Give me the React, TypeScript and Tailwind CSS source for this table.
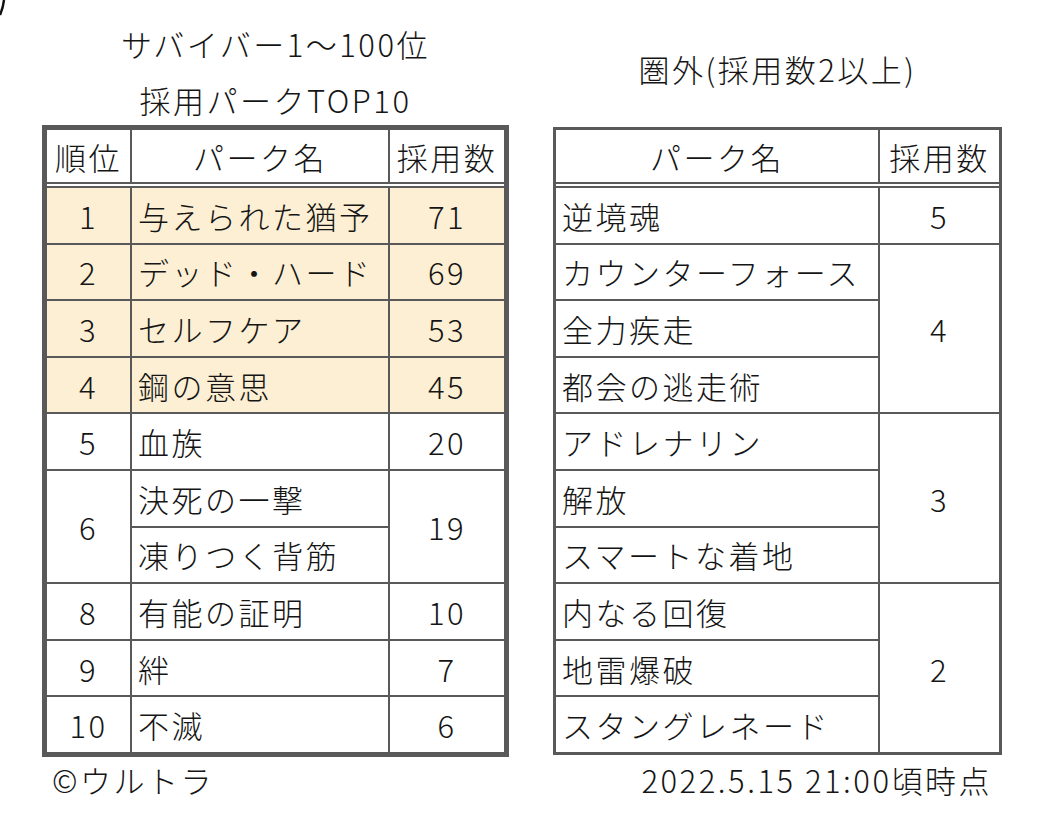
import React from "react";

type TopRow = { rank?: string; name: string; count?: string; span?: number; hot?: boolean };

const topRows: TopRow[] = [
  { rank: "1", name: "与えられた猶予", count: "71", hot: true },
  { rank: "2", name: "デッド・ハード", count: "69", hot: true },
  { rank: "3", name: "セルフケア", count: "53", hot: true },
  { rank: "4", name: "鋼の意思", count: "45", hot: true },
  { rank: "5", name: "血族", count: "20" },
  { rank: "6", name: "決死の一撃", count: "19", span: 2 },
  { name: "凍りつく背筋" },
  { rank: "8", name: "有能の証明", count: "10" },
  { rank: "9", name: "絆", count: "7" },
  { rank: "10", name: "不滅", count: "6" },
];

const outRows: { name: string; count?: string; span?: number }[] = [
  { name: "逆境魂", count: "5" },
  { name: "カウンターフォース", count: "4", span: 3 },
  { name: "全力疾走" },
  { name: "都会の逃走術" },
  { name: "アドレナリン", count: "3", span: 3 },
  { name: "解放" },
  { name: "スマートな着地" },
  { name: "内なる回復", count: "2", span: 3 },
  { name: "地雷爆破" },
  { name: "スタングレネード" },
];

const spanClass: Record<number, string> = { 1: "", 2: "row-span-2", 3: "row-span-3" };

export default function App() {
  return (
    <div className="relative w-[1040px] h-[828px] bg-white text-[#151515] font-['Noto_Sans_CJK_JP',sans-serif] text-[31px] tracking-[2.5px] font-light overflow-hidden">
      <svg className="absolute left-0 top-0" width="8" height="16" viewBox="0 0 8 16">
        <path d="M0 15 Q3 8 4 0" stroke="#111" strokeWidth="2.5" fill="none" />
      </svg>
      <div className="flex gap-[44px] pl-[42px]">
        {/* left: TOP10 */}
        <div className="flex flex-col w-[467px]">
          <div className="h-[125px] flex flex-col items-center pt-[24px] gap-[16px] leading-[40px]">
            <div>サバイバー1〜100位</div>
            <div>採用パークTOP10</div>
          </div>
          <div className="grid grid-cols-[83px_256px_114px] grid-rows-[52px_2px_repeat(10,54.6px)] gap-[2px] bg-[#595959] border-[5px] border-[#595959] leading-none">
            <div className="bg-white flex items-center justify-center">順位</div>
            <div className="bg-white flex items-center justify-center">パーク名</div>
            <div className="bg-white flex items-center justify-center">採用数</div>
            <div className="bg-white col-span-3"></div>
            {topRows.map((r, i) => (
              <React.Fragment key={i}>
                {r.rank && (
                  <div className={`${r.hot ? "bg-[#fcefd3]" : "bg-white"} ${spanClass[r.span ?? 1]} flex items-center justify-center`}>{r.rank}</div>
                )}
                <div className={`${r.hot ? "bg-[#fcefd3]" : "bg-white"} flex items-center pl-[6px]`}>{r.name}</div>
                {r.count && (
                  <div className={`${r.hot ? "bg-[#fcefd3]" : "bg-white"} ${spanClass[r.span ?? 1]} flex items-center justify-center`}>{r.count}</div>
                )}
              </React.Fragment>
            ))}
          </div>
          <div className="leading-[40px] pt-[3px] pl-[10px]">©ウルトラ</div>
        </div>

        {/* right: out of rank */}
        <div className="flex flex-col w-[449px]">
          <div className="h-[127px] flex flex-col items-center pt-[49px] leading-[40px]">
            <div>圏外(採用数2以上)</div>
          </div>
          <div className="grid grid-cols-[322px_119px] grid-rows-[52px_2px_repeat(10,54.6px)] gap-[2px] bg-[#595959] border-[3px] border-[#595959] leading-none">
            <div className="bg-white flex items-center justify-center">パーク名</div>
            <div className="bg-white flex items-center justify-center">採用数</div>
            <div className="bg-white col-span-2"></div>
            {outRows.map((r, i) => (
              <React.Fragment key={i}>
                <div className="bg-white flex items-center pl-[6px]">{r.name}</div>
                {r.count && (
                  <div className={`bg-white ${spanClass[r.span ?? 1]} flex items-center justify-center`}>{r.count}</div>
                )}
              </React.Fragment>
            ))}
          </div>
          <div className="leading-[40px] pt-[5px] pr-[10px] text-right">2022.5.15 21:00頃時点</div>
        </div>
      </div>
    </div>
  );
}
